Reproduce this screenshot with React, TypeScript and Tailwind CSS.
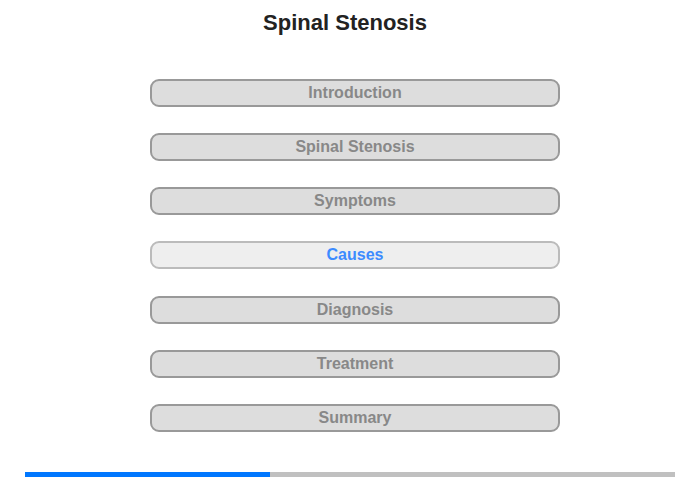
const items = ['Introduction', 'Spinal Stenosis', 'Symptoms', 'Causes', 'Diagnosis', 'Treatment', 'Summary']

export default function App() {
  const active = 'Causes'
  return (
    <div className="flex h-[480px] w-[700px] flex-col bg-white font-['Liberation_Sans',Arial,sans-serif]">
      <h1 className="pr-[10px] pt-[10px] text-center text-[22px] font-bold leading-[26px] text-[#222]">Spinal Stenosis</h1>
      <div className="mt-[43px] flex flex-col items-center gap-[26.17px] pl-[10px]">
        {items.map((item) =>
          item === active ? (
            <button
              key={item}
              className="h-[28px] w-[410px] rounded-[9px] border-2 border-[#bbb] bg-[#eee] text-[16px] font-bold leading-[24px] text-[#3d8bff]"
            >
              {item}
            </button>
          ) : (
            <button
              key={item}
              className="h-[28px] w-[410px] rounded-[9px] border-2 border-[#999] bg-[#ddd] text-[16px] font-bold leading-[24px] text-[#888]"
            >
              {item}
            </button>
          )
        )}
      </div>
      <div className="mx-[25px] mt-[40px] flex h-[5px] bg-[#c0c0c0]">
        <div className="h-full w-[245px] bg-[#0077ff]" />
      </div>
    </div>
  )
}
